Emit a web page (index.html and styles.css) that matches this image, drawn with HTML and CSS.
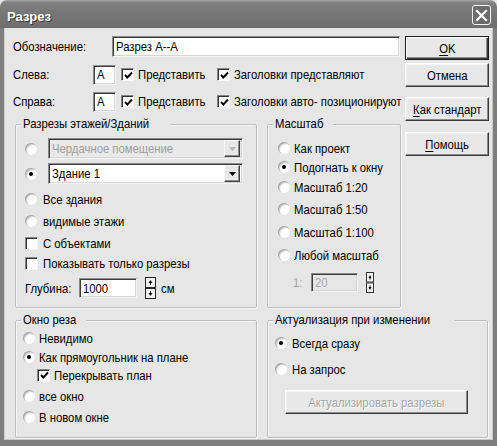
FILE: index.html
```html
<!DOCTYPE html>
<html lang="ru">
<head>
<meta charset="utf-8">
<title>Разрез</title>
<link rel="stylesheet" href="styles.css">
</head>
<body>
<div class="window">
  <div class="titlebar">
    <span class="title">Разрез</span>
    <span class="close"><svg width="13" height="13" viewBox="0 0 13 13"><path d="M2 2 L11 11 M11 2 L2 11" stroke="#fff" stroke-width="2.2" stroke-linecap="square"/></svg></span>
  </div>
  <div class="frame">
    <div class="upper">
      <div class="main">
        <div class="row row-name">
          <span class="lbl lbl-name"><span class="t">Обозначение:</span></span>
          <span class="input input-name"><span class="t">Разрез А--А</span></span>
        </div>
        <div class="row row-side">
          <span class="lbl lbl-side"><span class="t">Слева:</span></span>
          <span class="input input-letter"><span class="t">A</span></span>
          <span class="check check-a"><span class="box"><svg class="tick" width="9" height="9" viewBox="0 0 9 9"><path d="M1 4 L3.3 6.5 L8 1.5" fill="none" stroke="#000" stroke-width="1.9"/></svg></span><span class="t">Представить</span></span>
          <span class="check"><span class="box"><svg class="tick" width="9" height="9" viewBox="0 0 9 9"><path d="M1 4 L3.3 6.5 L8 1.5" fill="none" stroke="#000" stroke-width="1.9"/></svg></span><span class="t">Заголовки представляют</span></span>
        </div>
        <div class="row row-side row-side2">
          <span class="lbl lbl-side"><span class="t">Справа:</span></span>
          <span class="input input-letter"><span class="t">A</span></span>
          <span class="check check-a"><span class="box"><svg class="tick" width="9" height="9" viewBox="0 0 9 9"><path d="M1 4 L3.3 6.5 L8 1.5" fill="none" stroke="#000" stroke-width="1.9"/></svg></span><span class="t">Представить</span></span>
          <span class="check"><span class="box"><svg class="tick" width="9" height="9" viewBox="0 0 9 9"><path d="M1 4 L3.3 6.5 L8 1.5" fill="none" stroke="#000" stroke-width="1.9"/></svg></span><span class="t">Заголовки авто- позиционируют</span></span>
        </div>
        <div class="groups">
          <div class="group g-cuts">
            <span class="legend"><span class="t">Разрезы этажей/Зданий</span></span>
            <div class="opt c1"><span class="radio"></span><span class="combo disabled"><span class="combo-text"><span class="t">Чердачное помещение</span></span><span class="drop"><svg width="7" height="4" viewBox="0 0 7 4"><path d="M0 0 H7 L3.5 4Z" fill="#b8b8b8"/></svg></span></span></div>
            <div class="opt c2"><span class="radio on"><span class="dot"></span></span><span class="combo"><span class="combo-text"><span class="t">Здание 1</span></span><span class="drop"><svg width="7" height="4" viewBox="0 0 7 4"><path d="M0 0 H7 L3.5 4Z" fill="#000"/></svg></span></span></div>
            <div class="opt c3"><span class="radio"></span><span class="t">Все здания</span></div>
            <div class="opt c4"><span class="radio"></span><span class="t">видимые этажи</span></div>
            <div class="opt c5"><span class="box"></span><span class="t">С объектами</span></div>
            <div class="opt c6"><span class="box"></span><span class="t">Показывать только разрезы</span></div>
            <div class="opt c7">
              <span class="depth-lbl"><span class="t">Глубина:</span></span>
              <span class="input input-depth"><span class="t">1000</span></span>
              <span class="spin"><svg width="11" height="22" viewBox="0 0 11 22"><rect x="0.5" y="0.5" width="10" height="10" fill="#f2f2f2" stroke="#222"/><rect x="0.5" y="11.5" width="10" height="10" fill="#f2f2f2" stroke="#222"/><path d="M5.5 3 L3.5 6 H7.5Z M5 6 H6 V8 H5Z" fill="#000"/><path d="M5.5 19 L3.5 16 H7.5Z M5 14 H6 V16 H5Z" fill="#000"/></svg></span>
              <span class="unit"><span class="t">см</span></span>
            </div>
          </div>
          <div class="group g-scale">
            <span class="legend"><span class="t">Масштаб</span></span>
            <div class="opt s1"><span class="radio"></span><span class="t">Как проект</span></div>
            <div class="opt s2"><span class="radio on"><span class="dot"></span></span><span class="t">Подогнать к окну</span></div>
            <div class="opt s3"><span class="radio"></span><span class="t">Масштаб 1:20</span></div>
            <div class="opt s4"><span class="radio"></span><span class="t">Масштаб 1:50</span></div>
            <div class="opt s5"><span class="radio"></span><span class="t">Масштаб 1:100</span></div>
            <div class="opt s6"><span class="radio"></span><span class="t">Любой масштаб</span></div>
            <div class="opt s7">
              <span class="ratio-lbl"><span class="t">1:</span></span>
              <span class="input input-ratio"><span class="t">20</span></span>
              <span class="spin spin-small"><svg width="8" height="21" viewBox="0 0 8 21"><rect x="0.5" y="0.5" width="7" height="9.5" fill="#f2f2f2" stroke="#333"/><rect x="0.5" y="11" width="7" height="9.5" fill="#f2f2f2" stroke="#333"/><path d="M4 3 L2.5 6 H5.5Z M3.5 6 H4.5 V7.5 H3.5Z" fill="#111"/><path d="M4 18 L2.5 15 H5.5Z M3.5 13.5 H4.5 V15 H3.5Z" fill="#111"/></svg></span>
            </div>
          </div>
        </div>
      </div>
      <div class="buttons">
        <span class="btn btn-default"><span class="t tc"><u>O</u>K</span></span>
        <span class="btn btn-cancel"><span class="t tc">Отмена</span></span>
        <span class="btn btn-std"><span class="t tc"><u>К</u>ак стандарт</span></span>
        <span class="btn btn-help"><span class="t tc"><u>П</u>омощь</span></span>
      </div>
    </div>
    <div class="lower">
      <div class="group g-window">
        <span class="legend"><span class="t">Окно реза</span></span>
        <div class="opt w1"><span class="radio"></span><span class="t">Невидимо</span></div>
        <div class="opt w2"><span class="radio on"><span class="dot"></span></span><span class="t">Как прямоугольник на плане</span></div>
        <div class="opt w3"><span class="box"><svg class="tick" width="9" height="9" viewBox="0 0 9 9"><path d="M1 4 L3.3 6.5 L8 1.5" fill="none" stroke="#000" stroke-width="1.9"/></svg></span><span class="t">Перекрывать план</span></div>
        <div class="opt w4"><span class="radio"></span><span class="t">все окно</span></div>
        <div class="opt w5"><span class="radio"></span><span class="t">В новом окне</span></div>
      </div>
      <div class="group g-update">
        <span class="legend"><span class="t">Актуализация при изменении</span></span>
        <div class="opt u1"><span class="radio on"><span class="dot"></span></span><span class="t">Всегда сразу</span></div>
        <div class="opt u2"><span class="radio"></span><span class="t">На запрос</span></div>
        <span class="btn btn-update"><span class="t tc">Актуализировать разрезы</span></span>
      </div>
    </div>
  </div>
</div>
</body>
</html>
```

FILE: styles.css
```css
html, body {
  margin: 0;
  padding: 0;
  background: #ffffff;
}
body {
  font-family: "Liberation Sans", Arial, sans-serif;
  font-size: 13px;
  color: #000000;
}
.t {
  display: inline-block;
  white-space: nowrap;
  transform: scaleX(0.87);
  transform-origin: 0 50%;
}
.tc {
  transform-origin: 50% 50%;
}
.window {
  width: 497px;
  height: 446px;
  display: flex;
  flex-direction: column;
  background: #e6e6e6;
}
.titlebar {
  height: 28px;
  flex: none;
  box-sizing: border-box;
  padding: 0 6px 0 7px;
  display: flex;
  align-items: center;
  justify-content: space-between;
  border-radius: 7px 7px 0 0;
  background: linear-gradient(#a2a2a2 0, #808080 3px, #767676 50%, #6e6e6e 100%);
}
.title {
  font-weight: bold;
  font-size: 13px;
  color: #ffffff;
  text-shadow: 1px 1px 0 #3a3a3a;
  padding-top: 4px;
}
.close {
  width: 19px;
  height: 20px;
  margin-top: 2px;
  box-sizing: border-box;
  border: 1px solid #f2f2f2;
  border-radius: 3px;
  background: #6c6c6c;
  display: flex;
  align-items: center;
  justify-content: center;
}
.frame {
  flex: 1;
  box-sizing: border-box;
  border-style: solid;
  border-color: #7e7e7e;
  border-width: 0 4px 6px 4px;
  box-shadow: inset 1px 0 0 #d0d0d0, inset -1px -1px 0 #c8c8c8;
  padding: 8px 0 0 9px;
}
.upper {
  display: flex;
}
.main {
  width: 387px;
  flex: none;
}
.row {
  display: flex;
  align-items: center;
  height: 21px;
}
.row > *, .opt > *, .check > * {
  flex: none;
}
.row-side {
  margin-top: 7px;
}
.row-side2 {
  margin-top: 6px;
}
.lbl-name {
  width: 99px;
}
.lbl-side {
  width: 80px;
}
.input {
  box-sizing: border-box;
  background: #ffffff;
  border: 1px solid;
  border-color: #8a8a8a #f4f4f4 #f4f4f4 #8a8a8a;
  box-shadow: inset 1px 1px 0 #3c3c3c, inset -1px -1px 0 #d6d6d6;
  padding-left: 3px;
  display: flex;
  align-items: center;
  overflow: hidden;
}
.input-name {
  width: 288px;
  height: 21px;
}
.input-letter {
  width: 23px;
  height: 20px;
  margin-right: 5px;
}
.check {
  display: flex;
  align-items: center;
}
.check-a {
  width: 96px;
}
.box {
  width: 13px;
  height: 13px;
  flex: none;
  box-sizing: border-box;
  background: #ffffff;
  border: 1px solid;
  border-color: #858585 #f6f6f6 #f6f6f6 #858585;
  box-shadow: inset 1px 1px 0 #333333;
  margin-right: 4px;
  display: flex;
  align-items: center;
  justify-content: center;
}
.tick {
  margin: 1px 0 0 1px;
}
.buttons {
  width: 84px;
  flex: none;
  margin-left: 5px;
  display: flex;
  flex-direction: column;
}
.btn {
  box-sizing: border-box;
  height: 24px;
  flex: none;
  display: flex;
  align-items: center;
  justify-content: center;
  background: #e8e8e8;
  border: 1px solid;
  border-color: #ffffff #3a3a3a #3a3a3a #ffffff;
  box-shadow: inset -1px -1px 0 #8c8c8c, inset 1px 1px 0 #f4f4f4;
}
.btn u {
  text-decoration: underline;
  text-underline-offset: 2px;
}
.btn-default {
  border-color: #1e1e1e;
  box-shadow: inset 1px 1px 0 #ffffff, inset -1px -1px 0 #3a3a3a, inset -2px -2px 0 #8c8c8c;
}
.btn-cancel {
  margin-top: 3px;
}
.btn-std {
  margin-top: 10px;
}
.btn-help {
  margin-top: 11px;
}
.groups {
  display: flex;
  margin-top: 12px;
  margin-left: 2px;
  gap: 10px;
}
.group {
  box-sizing: border-box;
  flex: none;
  border: 1px solid #bdbdbd;
  border-radius: 2px;
  box-shadow: inset 1px 1px 0 #f6f6f6, 1px 1px 0 #f6f6f6;
}
.legend {
  display: block;
  width: max-content;
  line-height: 14px;
  height: 14px;
  margin: -8px 0 0 5px;
  padding: 0 2px;
  background: #e6e6e6;
}
.g-cuts {
  width: 242px;
  height: 184px;
}
.g-scale {
  width: 134px;
  height: 184px;
}
.opt {
  display: flex;
  align-items: center;
  height: 20px;
}
.radio {
  width: 12px;
  height: 12px;
  flex: none;
  box-sizing: border-box;
  border-radius: 50%;
  background: radial-gradient(circle at 60% 60%, #ffffff 55%, #ececec 100%);
  box-shadow: inset 1px 1px 0 #a8a8a8, inset 2px 2px 1px #d2d2d2;
  display: flex;
  align-items: center;
  justify-content: center;
}
.dot {
  width: 4px;
  height: 4px;
  border-radius: 50%;
  background: #000000;
}
/* group 1 */
.g-cuts .opt {
  padding-left: 9px;
}
.g-cuts .radio {
  margin-right: 6px;
}
.g-cuts .box {
  margin-right: 5px;
}
.c1 {
  height: 21px;
  margin-top: 7px;
}
.c2 {
  height: 21px;
  margin-top: 4px;
}
.c1 .radio, .c2 .radio {
  margin-right: 11px;
}
.c3 { margin-top: 5px; }
.c4 { margin-top: 2px; }
.c5 { margin-top: 2px; }
.c6 { margin-top: 0; }
.c7 {
  height: 22px;
  margin-top: 4px;
}
.combo {
  box-sizing: border-box;
  width: 195px;
  height: 21px;
  background: #ffffff;
  border: 1px solid;
  border-color: #8a8a8a #f4f4f4 #f4f4f4 #8a8a8a;
  box-shadow: inset 1px 1px 0 #3c3c3c, inset -1px -1px 0 #d6d6d6;
  display: flex;
  align-items: center;
  justify-content: space-between;
  padding: 2px;
}
.combo-text {
  padding-left: 1px;
}
.combo.disabled {
  background: #e9e9e9;
  color: #9e9e9e;
}
.drop {
  width: 16px;
  height: 17px;
  box-sizing: border-box;
  background: #e8e8e8;
  border: 1px solid;
  border-color: #f8f8f8 #404040 #404040 #f8f8f8;
  box-shadow: inset -1px -1px 0 #8c8c8c;
  display: flex;
  align-items: center;
  justify-content: center;
}
.depth-lbl {
  width: 54px;
}
.input-depth {
  width: 58px;
  height: 20px;
}
.spin {
  display: flex;
  margin-left: 8px;
}
.unit {
  margin-left: 5px;
}
/* group 2 */
.g-scale .opt {
  padding-left: 10px;
}
.g-scale .radio {
  margin-right: 4px;
}
.s1 { margin-top: 7px; }
.s2 { margin-top: -1px; }
.s3 { margin-top: 0; }
.s4 { margin-top: 2px; }
.s5 { margin-top: 3px; }
.s6 { margin-top: 3px; }
.s7 {
  height: 21px;
  margin-top: 7px;
}
.g-scale .s7 {
  padding-left: 25px;
}
.ratio-lbl {
  width: 18px;
  color: #a4a4a4;
}
.input-ratio {
  width: 47px;
  height: 19px;
  background: #e6e6e6;
  color: #a8a8a8;
}
/* lower */
.lower {
  display: flex;
  margin-top: 12px;
  margin-left: 2px;
  gap: 10px;
}
.g-window {
  width: 242px;
  height: 118px;
}
.g-update {
  width: 221px;
  height: 118px;
}
.g-window .opt {
  padding-left: 7px;
}
.g-window .radio {
  margin-right: 4px;
}
.w1 { margin-top: 1px; }
.w2 { margin-top: -1px; }
.w3 {
  margin-top: -2px;
}
.g-window .w3 {
  padding-left: 21px;
}
.w4 { margin-top: 1px; }
.w5 { margin-top: 1px; }
.g-update .opt {
  padding-left: 7px;
}
.g-update .radio {
  margin-right: 5px;
}
.u1 { margin-top: 6px; }
.u2 { margin-top: 6px; }
.btn-update {
  width: 183px;
  margin: 11px 0 0 17px;
  color: #a6a6a6;
  text-shadow: 1px 1px 0 #ffffff;
}
```
